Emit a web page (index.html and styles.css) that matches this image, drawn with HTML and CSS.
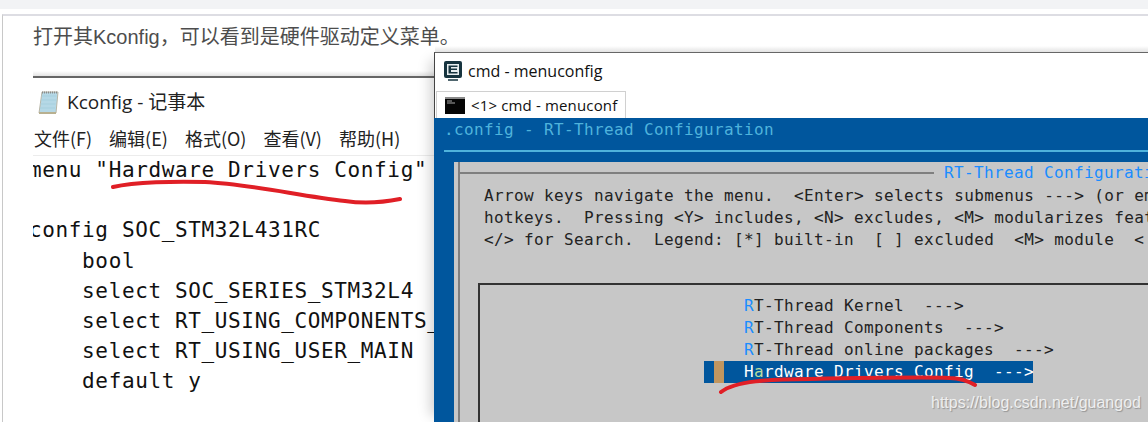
FILE: index.html
```html
<!DOCTYPE html>
<html lang="zh-CN">
<head>
<meta charset="utf-8">
<title>Kconfig</title>
<link rel="stylesheet" href="styles.css">
</head>
<body>
<div class="page">
  <div class="topbar"></div>
  <div class="article">
    <p class="para">打开其Kconfig，可以看到是硬件驱动定义菜单。</p>
    <div class="shot">
      <div class="notepad">
        <div class="np-title">
          <svg class="np-icon" width="24" height="24" viewBox="0 0 24 24"><path d="M6 2h16l-2 21H3z" fill="#b5d8e6" stroke="#b9b6a6"/><path d="M5.500 6h15M5 10h15M4.500 14h15M4 18h15" stroke="#a6cfdd"/><path d="M6 2.500h16" stroke="#8b8b8b" stroke-width="2" stroke-dasharray="1 1"/><path d="M3 23h17" stroke="#b8b090" stroke-width="2"/></svg>
          <span>Kconfig - 记事本</span>
        </div>
        <div class="np-menu">
          <span>文件(F)</span><span>编辑(E)</span><span>格式(O)</span><span>查看(V)</span><span>帮助(H)</span>
        </div>
        <pre class="np-code">menu "Hardware Drivers Config"

config SOC_STM32L431RC
    bool
    select SOC_SERIES_STM32L4
    select RT_USING_COMPONENTS_INIT
    select RT_USING_USER_MAIN
    default y</pre>
      </div>
    </div>
  </div>

  <div class="cmd">
    <div class="cmd-title">
      <svg width="20" height="22" viewBox="0 0 20 22"><rect x="1" y="1" width="18" height="17" rx="2" fill="#17343f"/><path d="M4 4h12v11H4zM5.500 5.500v8h9v-1.500H8V10h6V8.500H8V7h6.500V5.500z" fill="#e8eef0" fill-rule="evenodd"/><path d="M5 20h10" stroke="#17343f" stroke-width="1.500"/></svg>
      <span>cmd - menuconfig</span>
    </div>
    <div class="cmd-tabs">
      <div class="cmd-tab">
        <svg width="20" height="17" viewBox="0 0 20 17"><rect width="20" height="17" fill="#050505"/><rect width="20" height="2" fill="#8a8a8a"/><path d="M2 4h5M2 6h8" stroke="#aaa"/></svg>
        <span>&lt;1&gt; cmd - menuconf</span>
      </div>
    </div>
    <div class="term">
      <div class="term-head">.config - RT-Thread Configuration</div>
      <div class="term-panel">
        <div class="dialog">
          <div class="dialog-head"><span class="dialog-line"></span><span class="dialog-name">RT-Thread Configuration</span></div>
          <pre class="help">Arrow keys navigate the menu.  &lt;Enter&gt; selects submenus ---&gt; (or empty submenus ----).
hotkeys.  Pressing &lt;Y&gt; includes, &lt;N&gt; excludes, &lt;M&gt; modularizes features.
&lt;/&gt; for Search.  Legend: [*] built-in  [ ] excluded  &lt;M&gt; module  &lt; &gt; module capable</pre>
          <div class="list">
            <div class="item"><b>R</b>T-Thread Kernel  ---&gt;</div>
            <div class="item"><b>R</b>T-Thread Components  ---&gt;</div>
            <div class="item"><b>R</b>T-Thread online packages  ---&gt;</div>
            <div class="item item-on"><i class="cursor"></i>H<em>a</em>rdware Drivers Config  ---&gt;</div>
          </div>
        </div>
      </div>
    </div>
  </div>

  <svg class="ink" width="1148" height="422" viewBox="0 0 1148 422">
    <path d="M113 187C135 182 175 181 205 182C250 184 300 196 345 201C365 204 385 202 400 199" />
    <path d="M721 392C735 381 770 379 810 379C860 378 920 377 950 378C960 378 968 381 975 385" />
  </svg>
  <div class="mark">https://blog.csdn.net/guangod</div>
</div>
</body>
</html>
```
FILE: styles.css
```css
* { box-sizing: border-box; }
html, body { margin: 0; padding: 0; background: #fff; }
.page { position: relative; width: 1148px; height: 422px; overflow: hidden; background: #fff; }
.topbar { height: 9px; background: #f2f3f5; }
.article {
  margin: 5px 0 0 2px;
  height: 408px;
  border-top: 2px solid #dddde3;
  border-left: 1px solid #c8c8c8;
  padding-left: 30px;
  overflow: hidden;
}
.para {
  margin: 0;
  height: 40px;
  padding-top: 6px;
  font: 20px/30px "Liberation Sans", "Noto Sans CJK SC", sans-serif;
  color: #4d4d4d;
  white-space: nowrap;
}
.shot {
  background: linear-gradient(#fff 0, #fff 15px, #d8d8d8 22px);
  height: 22px;
}
.notepad { padding-top: 20px; }
.np-title {
  display: flex; align-items: center; gap: 7px;
  border-top: 2px solid #666;
  height: 46px;
  padding: 4px 0 0 3px;
  font: 19px/24px "Open Sans", "Noto Sans CJK SC", sans-serif;
  color: #222;
  background: #fff;
}
.np-menu {
  display: flex; gap: 17px;
  height: 34px;
  padding: 4px 0 0 1px;
  font: 18px/24px "Noto Sans CJK SC", sans-serif;
  color: #222;
  background: #fff;
  border-bottom: 1px solid #ececec;
}
.np-code {
  margin: -1px 0 0 -4px;
  font: 21px/30.200px "DejaVu Sans Mono", monospace;
  letter-spacing: 0.630px;
  color: #111;
  height: 270px;
  clip-path: inset(0 0 0 4px);
}
.cmd {
  position: absolute; left: 434px; top: 52px; right: -2px; bottom: -2px;
  background: #fff;
  border-left: 1px solid #444;
  border-top: 1px solid #666;
  box-shadow: -12px 0 12px -8px rgba(0,0,0,.18);
  display: flex; flex-direction: column;
}
.cmd::before {
  content: "";
  position: absolute; left: 0; right: 0; top: -7px; height: 6px;
  background: linear-gradient(#fff, #e2e2e2);
}
.cmd-title {
  height: 36px; display: flex; align-items: center; gap: 5px; padding: 0 0 0 8px;
  font: 16px/24px "Open Sans", sans-serif; color: #111;
}
.cmd-tabs { height: 29px; padding: 2px 0 0 1px; }
.cmd-tab {
  display: inline-flex; align-items: center; gap: 6px;
  width: 190px; height: 27px; padding-left: 8px;
  border: 1px solid #d0d0d0; border-bottom: 0;
  font: 15px/20px "Open Sans", sans-serif; letter-spacing: 0.150px; color: #111;
  white-space: nowrap; overflow: hidden;
}
.term {
  flex: 1; margin-left: -1px; background: #00569d;
  font: 16px/22px "DejaVu Sans Mono", monospace; letter-spacing: 0.370px;
  overflow: hidden;
}
.term-head {
  height: 34px; margin-left: 10px; padding-top: 1px;
  border-bottom: 2px solid #4fb3dc;
  color: #4fb3dc;
  white-space: pre;
}
.term-panel { margin: 10px 0 0 20px; background: #c7c7c7; height: 280px; padding: 0 0 0 4px; }
.dialog { border-left: 2px solid #7f7f7f; height: 280px; }
.dialog-head { display: flex; align-items: center; height: 22px; white-space: nowrap; }
.dialog-line { width: 474px; height: 2px; background: #7f7f7f; flex: none; }
.dialog-name { color: #1a8cff; margin-left: 10px; }
.help { margin: 0 0 0 24px; font: inherit; color: #222; padding-top: 1px; white-space: pre; }
.list { margin: 32px 0 0 18px; border: 2px solid #333; height: 200px; padding-top: 10px; color: #222; }
.item { height: 22px; padding-left: 264px; white-space: pre; }
.item b { font-weight: normal; color: #1a8cff; }
.item-on {
  position: relative; width: 329px; margin-left: 224px; padding-left: 40px;
  background: #00569d; color: #fff;
}
.item-on em { font-style: normal; color: #b8dca0; }
.cursor { position: absolute; left: 10px; top: 0; width: 10px; height: 22px; background: #c09660; }
.ink { position: absolute; left: 0; top: 0; pointer-events: none; }
.ink path { fill: none; stroke: #e01f26; stroke-width: 4px; stroke-linecap: round; }
.mark {
  position: absolute; left: 931px; top: 393px;
  font: 16px/20px "Liberation Sans", sans-serif;
  color: rgba(255,255,255,.8);
  text-shadow: 1px 1px 1px rgba(0,0,0,.25);
  white-space: nowrap;
}
```
